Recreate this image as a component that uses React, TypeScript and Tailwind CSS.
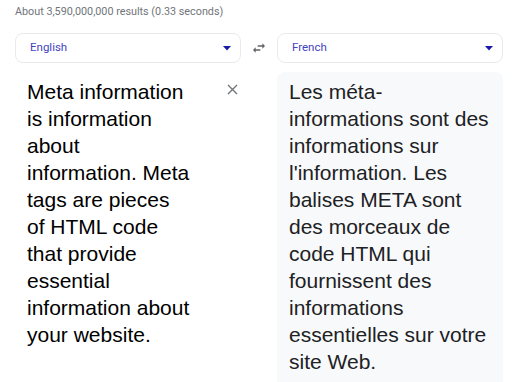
import React from "react";

function Caret() {
  return (
    <svg width="8" height="5" viewBox="0 0 8 5" className="shrink-0">
      <path d="M0 0h8L4 4.5z" fill="#1a1aa6" />
    </svg>
  );
}

function LangSelect({ label }: { label: string }) {
  return (
    <div className="flex h-[30px] items-center justify-between rounded-lg border border-[#e8eaed] bg-white pl-[14px] pr-[9px]">
      <span className="text-[11.5px] text-[#4343c2]" style={{ fontFamily: "Roboto, Arial, sans-serif" }}>
        {label}
      </span>
      <Caret />
    </div>
  );
}

export default function App() {
  return (
    <div className="min-h-[382px] w-[526px] bg-white" style={{ fontFamily: "'Liberation Sans', Arial, sans-serif" }}>
      <div className="px-[15px]">
        <div
          className="pt-[4px] text-[10.8px] leading-[16px] text-[#70757a]"
          style={{ fontFamily: "Roboto, Arial, sans-serif" }}
        >
          About 3,590,000,000 results (0.33 seconds)
        </div>
        <div className="mt-[13px] grid grid-cols-[226px_36px_226px] items-center">
          <LangSelect label="English" />
          <div className="flex justify-center">
            <svg width="16" height="16" viewBox="0 0 24 24">
              <path
                d="M6.99 11L3 15l3.99 4v-3H14v-2H6.99v-3zM21 9l-3.99-4v3H10v2h7.01v3L21 9z"
                fill="#5f6368"
              />
            </svg>
          </div>
          <LangSelect label="French" />
        </div>
        <div className="mt-[9px] grid grid-cols-[226px_36px_226px]">
          <div className="flex pl-3 pr-[3px] pt-[6px]">
            <div className="w-[164px] text-[21px] leading-[27px] text-[#000]">
              Meta information is information about information. Meta tags are pieces of HTML code that provide
              essential information about your website.
            </div>
            <div className="ml-auto pt-[6px]">
              <svg width="11" height="11" viewBox="0 0 11 11">
                <path d="M1 1L10 10M10 1L1 10" stroke="#70757a" strokeWidth="1.4" />
              </svg>
            </div>
          </div>
          <div />
          <div className="min-h-[310px] rounded-t-lg bg-[#f8f9fa] px-3 pt-[6px]">
            <div className="text-[21px] leading-[27px] text-[#202124]">
              Les méta-informations sont des informations sur l'information. Les balises META sont des morceaux de
              code HTML qui fournissent des informations essentielles sur votre site Web.
            </div>
          </div>
        </div>
      </div>
    </div>
  );
}
